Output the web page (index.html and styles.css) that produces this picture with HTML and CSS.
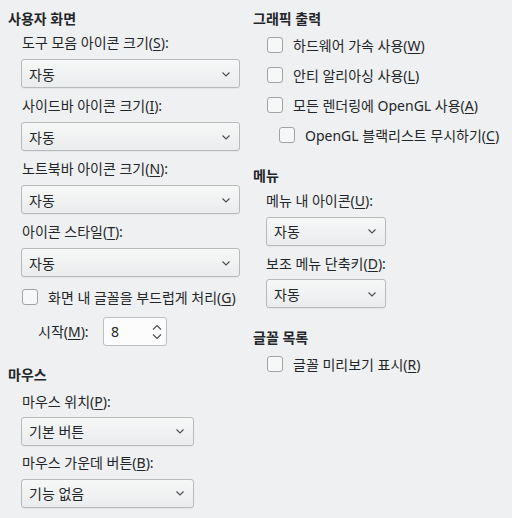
FILE: index.html
```html
<!DOCTYPE html>
<html lang="ko">
<head>
<meta charset="utf-8">
<link rel="stylesheet" href="styles.css">
</head>
<body>
<div class="page">
  <div class="col col-left">
    <div class="heading">사용자 화면</div>
    <div class="label first">도구 모음 아이콘 크기(<u>S</u>):</div>
    <div class="combo wide"><span>자동</span><svg class="chev" width="8" height="5" viewBox="0 0 8 5"><path d="M0.5 0.5 L4 4 L7.5 0.5" /></svg></div>
    <div class="label">사이드바 아이콘 크기(<u>I</u>):</div>
    <div class="combo wide"><span>자동</span><svg class="chev" width="8" height="5" viewBox="0 0 8 5"><path d="M0.5 0.5 L4 4 L7.5 0.5" /></svg></div>
    <div class="label">노트북바 아이콘 크기(<u>N</u>):</div>
    <div class="combo wide"><span>자동</span><svg class="chev" width="8" height="5" viewBox="0 0 8 5"><path d="M0.5 0.5 L4 4 L7.5 0.5" /></svg></div>
    <div class="label">아이콘 스타일(<u>T</u>):</div>
    <div class="combo wide"><span>자동</span><svg class="chev" width="8" height="5" viewBox="0 0 8 5"><path d="M0.5 0.5 L4 4 L7.5 0.5" /></svg></div>
    <div class="check aa-row"><span class="box"></span><span>화면 내 글꼴을 부드럽게 처리(<u>G</u>)</span></div>
    <div class="spin-row">
      <span class="spin-label">시작(<u>M</u>):</span>
      <div class="spin"><span>8</span><svg class="spin-arrows" width="10" height="16" viewBox="0 0 10 16"><path d="M1 5.5 L5 1.5 L9 5.5" /><path d="M1 10.5 L5 14.5 L9 10.5" /></svg></div>
    </div>
    <div class="heading mouse-head">마우스</div>
    <div class="label mouse-label">마우스 위치(<u>P</u>):</div>
    <div class="combo narrow mouse-combo1"><span>기본 버튼</span><svg class="chev" width="8" height="5" viewBox="0 0 8 5"><path d="M0.5 0.5 L4 4 L7.5 0.5" /></svg></div>
    <div class="label mouse-label2">마우스 가운데 버튼(<u>B</u>):</div>
    <div class="combo narrow"><span>기능 없음</span><svg class="chev" width="8" height="5" viewBox="0 0 8 5"><path d="M0.5 0.5 L4 4 L7.5 0.5" /></svg></div>
  </div>
  <div class="col col-right">
    <div class="heading">그래픽 출력</div>
    <div class="checks">
      <div class="check"><span class="box"></span><span>하드웨어 가속 사용(<u>W</u>)</span></div>
      <div class="check"><span class="box"></span><span>안티 알리아싱 사용(<u>L</u>)</span></div>
      <div class="check"><span class="box"></span><span>모든 렌더링에 OpenGL 사용(<u>A</u>)</span></div>
      <div class="check sub"><span class="box"></span><span>OpenGL 블랙리스트 무시하기(<u>C</u>)</span></div>
    </div>
    <div class="heading menu-head">메뉴</div>
    <div class="label menu-label1">메뉴 내 아이콘(<u>U</u>):</div>
    <div class="combo small menu-combo1"><span>자동</span><svg class="chev" width="8" height="5" viewBox="0 0 8 5"><path d="M0.5 0.5 L4 4 L7.5 0.5" /></svg></div>
    <div class="label menu-label2">보조 메뉴 단축키(<u>D</u>):</div>
    <div class="combo small menu-combo2"><span>자동</span><svg class="chev" width="8" height="5" viewBox="0 0 8 5"><path d="M0.5 0.5 L4 4 L7.5 0.5" /></svg></div>
    <div class="heading font-head">글꼴 목록</div>
    <div class="check font-check"><span class="box"></span><span>글꼴 미리보기 표시(<u>R</u>)</span></div>
  </div>
</div>
</body>
</html>
```

FILE: styles.css
```css
html, body {
  margin: 0;
  padding: 0;
}

body {
  width: 512px;
  height: 518px;
  overflow: hidden;
  background: #eff0f1;
  color: #232629;
  font-family: "Noto Sans", "Noto Sans CJK KR", sans-serif;
  font-size: 14px;
  line-height: 19px;
}

u {
  text-decoration: underline;
  text-underline-offset: 2px;
  text-decoration-thickness: 1px;
}

.page {
  display: grid;
  grid-template-columns: 245px 1fr;
  padding: 9px 0 0 8px;
}

.col {
  display: flex;
  flex-direction: column;
  align-items: flex-start;
}

.heading {
  font-weight: bold;
  height: 19px;
  white-space: nowrap;
}

.label {
  height: 19px;
  margin-left: 14px;
  margin-top: 8px;
  white-space: nowrap;
}

.label.first {
  margin-top: 5px;
}

.combo {
  box-sizing: border-box;
  height: 29px;
  margin-left: 13px;
  margin-top: 7px;
  display: flex;
  align-items: center;
  justify-content: space-between;
  padding: 1px 9px 0 7px;
  border: 1px solid #b7b9ba;
  border-radius: 3px;
  background: linear-gradient(#f6f7f7, #ebeced);
  box-shadow: 0 1px 0 rgba(0, 0, 0, 0.04);
  white-space: nowrap;
}

.combo.wide { width: 219px; }
.combo.narrow { width: 173px; }
.combo.small { width: 120px; }

.chev path,
.spin-arrows path {
  fill: none;
  stroke: #4a4c4e;
  stroke-width: 1.1;
}

.check {
  display: flex;
  align-items: center;
  gap: 10px;
  height: 19px;
  margin-left: 14px;
  white-space: nowrap;
}

.box {
  box-sizing: border-box;
  width: 16px;
  height: 16px;
  flex: none;
  border: 1px solid #a1a3a5;
  border-radius: 3px;
  background: #f6f7f7;
}

.aa-row {
  margin-top: 10.5px;
}

.spin-row {
  display: flex;
  align-items: center;
  margin-top: 10px;
  margin-left: 30px;
  height: 29px;
}

.spin-label {
  width: 65px;
}

.spin {
  box-sizing: border-box;
  width: 64px;
  height: 29px;
  display: flex;
  align-items: center;
  justify-content: space-between;
  padding: 1px 4px 0 7px;
  border: 1px solid #bcbebf;
  border-radius: 3px;
  background: #fcfcfc;
}

.mouse-head { margin-top: 19.5px; }
.label.mouse-label { margin-top: 7.5px; }
.combo.mouse-combo1 { margin-top: 6px; }
.label.mouse-label2 { margin-top: 7px; }

.checks {
  display: flex;
  flex-direction: column;
  gap: 11px;
  margin-top: 7.5px;
}

.check.sub {
  margin-left: 26px;
}

.menu-head { margin-top: 21.5px; }
.label.menu-label1 { margin-top: 6px; margin-left: 13px; }
.combo.menu-combo1 { margin-top: 6.5px; }
.label.menu-label2 { margin-top: 8.5px; margin-left: 13px; }
.combo.menu-combo2 { margin-top: 6.3px; }
.font-head { margin-top: 20px; }
.font-check { margin-top: 7.7px; }
```
